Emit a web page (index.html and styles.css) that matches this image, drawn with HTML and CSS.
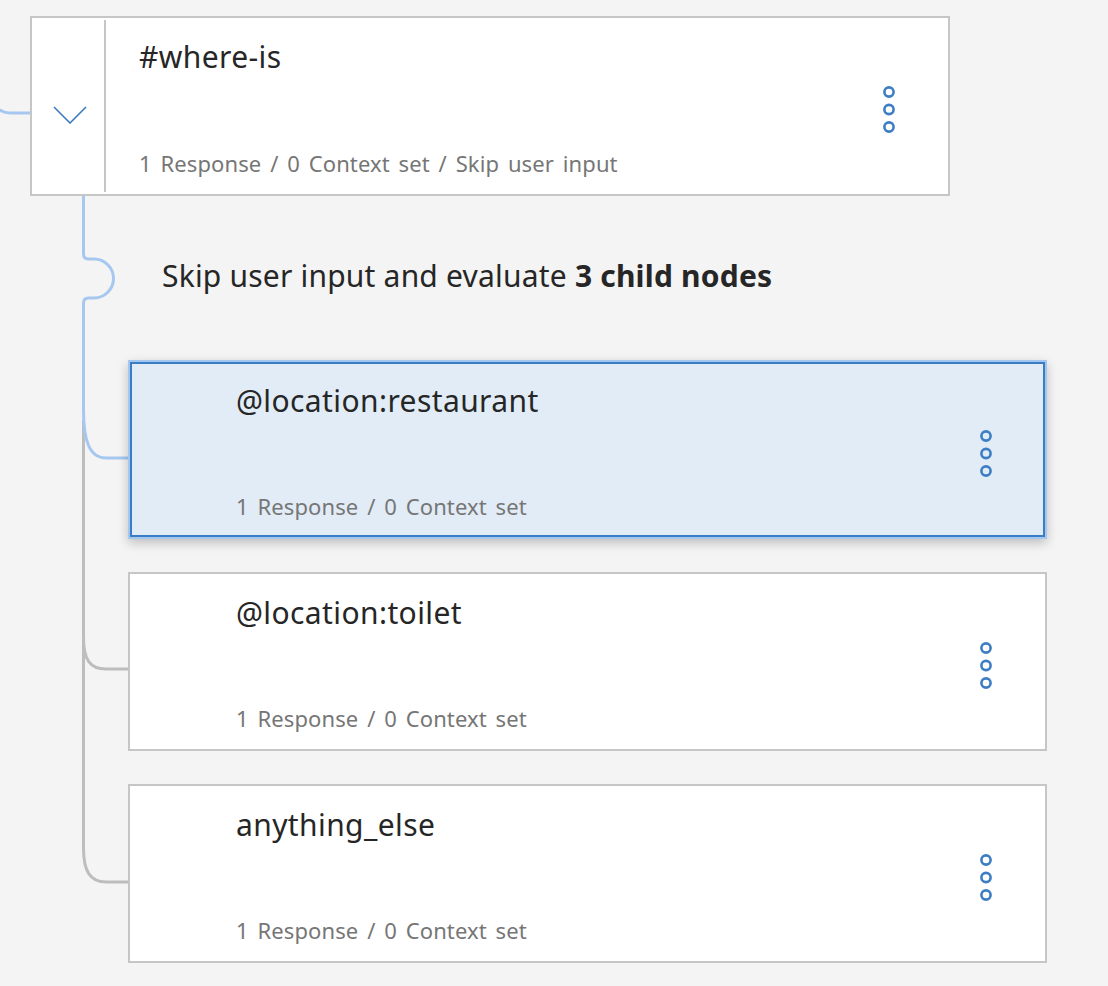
FILE: index.html
```html
<!DOCTYPE html>
<html lang="en">
<head>
<meta charset="utf-8">
<title>Dialog nodes</title>
<link rel="stylesheet" href="styles.css">
</head>
<body>
<div class="canvas">
  <svg class="connectors" width="140" height="986" viewBox="0 0 140 986">
    <path class="line-active" d="M-10 93 A20 20 0 0 0 10 113 H32"/>
    <path class="line-muted" d="M83.5 420 V637 C83.5 660 90 669 106 669 H130"/>
    <path class="line-muted" d="M83.5 640 V848 C83.5 871 90 882 106 882 H130"/>
    <path class="line-active" d="M83.5 195 V254 Q83.5 259 88.5 259 H94 A19.5 19.5 0 0 1 94 298 H88.5 Q83.5 298 83.5 303 V410 C83.5 442 90 458 106 458 H130"/>
  </svg>

  <div class="node parent">
    <div class="toggle">
      <svg class="chevron" width="34" height="18" viewBox="0 0 34 18"><path d="M1 1 L17 17 L33 1"/></svg>
    </div>
    <div class="node-body">
      <div class="node-title">#where-is</div>
      <div class="node-meta">1 Response / 0 Context set / Skip user input</div>
    </div>
    <div class="menu">
      <svg width="14" height="48" viewBox="0 0 14 48"><circle cx="7" cy="7" r="4.6"/><circle cx="7" cy="24.5" r="4.6"/><circle cx="7" cy="42" r="4.6"/></svg>
    </div>
  </div>

  <div class="skip">Skip user input and evaluate <b>3 child nodes</b></div>

  <div class="children">
    <div class="node child selected">
      <div class="node-body">
        <div class="node-title">@location:restaurant</div>
        <div class="node-meta">1 Response / 0 Context set</div>
      </div>
      <div class="menu">
        <svg width="14" height="48" viewBox="0 0 14 48"><circle cx="7" cy="7" r="4.6"/><circle cx="7" cy="24.5" r="4.6"/><circle cx="7" cy="42" r="4.6"/></svg>
      </div>
    </div>
    <div class="node child">
      <div class="node-body">
        <div class="node-title">@location:toilet</div>
        <div class="node-meta">1 Response / 0 Context set</div>
      </div>
      <div class="menu">
        <svg width="14" height="48" viewBox="0 0 14 48"><circle cx="7" cy="7" r="4.6"/><circle cx="7" cy="24.5" r="4.6"/><circle cx="7" cy="42" r="4.6"/></svg>
      </div>
    </div>
    <div class="node child">
      <div class="node-body">
        <div class="node-title">anything_else</div>
        <div class="node-meta">1 Response / 0 Context set</div>
      </div>
      <div class="menu">
        <svg width="14" height="48" viewBox="0 0 14 48"><circle cx="7" cy="7" r="4.6"/><circle cx="7" cy="24.5" r="4.6"/><circle cx="7" cy="42" r="4.6"/></svg>
      </div>
    </div>
  </div>
</div>
</body>
</html>
```

FILE: styles.css
```css
html, body {
  margin: 0;
  padding: 0;
  background: #f4f4f4;
}
body {
  font-family: "Noto Sans", "Open Sans", sans-serif;
  color: #2c2c2c;
  width: 1108px;
  height: 986px;
  overflow: hidden;
}
.canvas {
  position: relative;
  padding: 16px 0 0 30px;
}
.connectors {
  position: absolute;
  left: 0;
  top: 0;
  z-index: 0;
  fill: none;
}
.line-active {
  stroke: #a6c8f0;
  stroke-width: 3;
  fill: none;
}
.line-muted {
  stroke: #bdbdbd;
  stroke-width: 3;
  fill: none;
}
.node {
  position: relative;
  z-index: 1;
  display: flex;
  box-sizing: border-box;
  background: #ffffff;
  border: 2px solid #c6c6c6;
}
.parent {
  width: 920px;
  height: 180px;
}
.toggle {
  width: 74px;
  margin: 2px 0;
  border-right: 2px solid #c6c6c6;
  display: flex;
  justify-content: center;
  align-items: flex-start;
  padding-top: 86px;
  padding-left: 4px;
  box-sizing: border-box;
}
.chevron path {
  fill: none;
  stroke: #3b7bc2;
  stroke-width: 1.6;
}
.node-body {
  flex: 1;
  display: flex;
  flex-direction: column;
  justify-content: space-between;
  padding: 20px 0 16px 33px;
}
.child .node-body {
  padding-left: 106px;
}
.node-title {
  font-size: 30px;
  line-height: 38px;
  letter-spacing: 0.4px;
  color: #262626;
}
.node-meta {
  font-size: 22px;
  line-height: 30px;
  letter-spacing: 0.1px;
  word-spacing: 3px;
  color: #767676;
}
.menu {
  display: flex;
  align-items: center;
  padding-right: 52px;
  padding-top: 6px;
}
.menu circle {
  fill: none;
  stroke: #3c7dc3;
  stroke-width: 2.6;
}
.skip {
  margin: 0 0 0 132px;
  height: 164px;
  padding-top: 61px;
  box-sizing: border-box;
  font-size: 30px;
  line-height: 38px;
  letter-spacing: 0.2px;
  color: #262626;
}
.skip b {
  font-weight: 700;
}
.children {
  margin-left: 98px;
  display: flex;
  flex-direction: column;
  gap: 33px;
}
.child {
  width: 919px;
  height: 179px;
}
.selected {
  background: #e1ecf7;
  border-color: #a3c7ef;
  box-shadow: inset 0 0 0 2px #3b7dc4, 0 4px 10px rgba(0, 0, 0, 0.22);
}
```
